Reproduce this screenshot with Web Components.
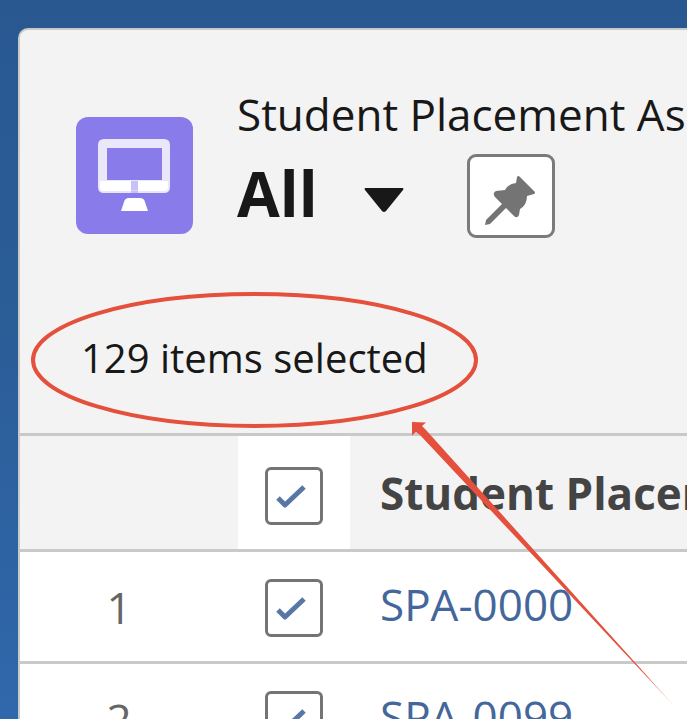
<!DOCTYPE html>
<html lang="en">
<head>
<meta charset="utf-8">
<title>Student Placement</title>
<style>
  html { height: 100%; overflow: hidden; }
  body {
    margin: 0; height: 100%; overflow: hidden;
    font-family: "Open Sans", "Noto Sans", sans-serif;
    color: #181818;
    background: linear-gradient(#295891, #2b5d97 45%, #3068ac);
  }
</style>
</head>
<body>
<list-page></list-page>

<script>
function define(name, html, setup) {
  const template = document.createElement('template');
  template.innerHTML = html;
  customElements.define(name, class extends HTMLElement {
    connectedCallback() {
      if (this.shadowRoot) return;
      const root = this.attachShadow({ mode: 'open' });
      root.append(template.content.cloneNode(true));
      if (setup) setup(this, root);
    }
  });
}

define('object-icon', `
  <style>
    :host { display: block; width: 117px; height: 117px; border-radius: 12px; background: #8a7bea; }
    svg { display: block; width: 100%; height: 100%; }
  </style>
  <svg viewBox="0 0 117 117" aria-hidden="true">
    <path fill="#fff" fill-rule="evenodd" d="M28 22H88Q94 22 94 28V70Q94 76 88 76H28Q22 76 22 70V28Q22 22 28 22ZM31 31V63H86V31Z" opacity=".82"/>
    <path fill="#fff" d="M24 64H55V73H62V64H92V70Q92 74 88 74H28Q24 74 24 70Z"/>
    <path fill="#8a7bea" opacity=".35" d="M55 64H62V76H55Z"/>
    <path fill="#fff" d="M53 81H64Q68 81 69 85L72 94H45L48 85Q49 81 53 81Z"/>
  </svg>`);

define('pin-button', `
  <style>
    :host { display: block; }
    button { display: grid; place-items: center; box-sizing: border-box; width: 88px; height: 84px; padding: 0;
      border: 3px solid #7b7b7b; border-radius: 9px; background: #fff; }
    svg { display: block; width: 82px; height: 78px; }
  </style>
  <button type="button" aria-label="Pin this list view">
    <svg viewBox="0 0 82 78" aria-hidden="true">
      <path fill="#747474" d="M47 20Q48 18 50 20L64 34Q66 36 64 37L57 39Q57 48 50 52L49 58Q47 62 44 59L36 51L20 67L15 68L16 63L32 47L25 40Q22 36 26 34L35 33Q38 27 46 26Z"/>
    </svg>
  </button>`);

define('view-header', `
  <style>
    :host { display: flex; align-items: flex-start; gap: 44px; padding: 54px 0 80px 56px; white-space: nowrap; }
    object-icon { flex: none; margin-top: 33px; }
    .title { flex: 1; min-width: 0; display: flex; flex-direction: column; }
    .name { margin: 0; font-size: 44px; line-height: 60px; font-weight: 400; }
    .view { display: flex; align-items: center; height: 104px; }
    h1 { margin: 0; padding-bottom: 6px; font-size: 62px; line-height: 72px; font-weight: 700; }
    .menu { display: block; margin: 8px 62px 0 45px; padding: 0; border: 0; background: none; color: inherit; }
    .menu svg { display: block; width: 42px; height: 26px; }
  </style>
  <object-icon></object-icon>
  <div class="title">
    <p class="name">Student Placement As</p>
    <div class="view">
      <h1>All</h1>
      <button class="menu" type="button" aria-label="Select a list view">
        <svg viewBox="0 0 42 26" aria-hidden="true"><path fill="#181818" d="M2 1H40Q41 2 40 3L23 24Q21 26 19 24L2 3Q1 2 2 1Z"/></svg>
      </button>
      <pin-button></pin-button>
    </div>
  </div>`);

define('selection-status', `
  <style>
    :host { display: block; padding: 0 0 45px 61px; font-size: 40px; line-height: 60px; white-space: nowrap; }
  </style>
  <slot></slot>`);

define('check-box', `
  <style>
    :host { display: block; width: 58px; height: 58px; }
    label { display: grid; }
    input, svg { grid-area: 1 / 1; width: 58px; height: 58px; box-sizing: border-box; margin: 0; }
    input { appearance: none; border: 3px solid #747474; border-radius: 6px; background: #fff; }
    svg { pointer-events: none; visibility: hidden; }
    input:checked + svg { visibility: visible; }
  </style>
  <label><input type="checkbox" checked>
    <svg viewBox="0 0 58 58" aria-hidden="true"><path fill="none" stroke="#5877a6" stroke-width="5" stroke-linejoin="round" d="M13 31L20 38L39 20"/></svg>
  </label>`,
  (host, root) => root.querySelector('input').setAttribute('aria-label', host.getAttribute('label')));

define('placement-table', `
  <style>
    :host { display: block; }
    table { width: 100%; border-collapse: separate; border-spacing: 0; table-layout: fixed; font-size: 44px; line-height: 60px; }
    .number { width: 218px; }
    .check { width: 112px; }
    th, td { box-sizing: border-box; padding: 0; border-bottom: 3px solid #c9c9c9; font-weight: 400; white-space: nowrap; background: #fff; }
    th { height: 119px; background: #f3f3f3; }
    td { height: 112px; }
    thead th { border-top: 3px solid #c9c9c9; }
    thead .check { background: #fff; padding-top: 6px; }
    tbody .check { padding-top: 2px; }
    .number { text-align: center; color: #666; padding-right: 20px; }
    .check check-box { margin: 0 auto; }
    .name { text-align: left; padding-left: 30px; }
    thead .name { font-weight: 700; color: #444; }
    tbody .name { padding-bottom: 6px; }
    a { color: #44679b; text-decoration: none; }
  </style>
  <table>
    <thead><tr>
      <th class="number"></th>
      <th class="check"><check-box label="Select all items"></check-box></th>
      <th class="name" scope="col">Student Placem</th>
    </tr></thead>
    <tbody></tbody>
  </table>`,
  (host, root) => {
    root.querySelector('tbody').innerHTML = ['SPA-0000', 'SPA-0099'].map((id, i) => `
      <tr><td class="number">${i + 1}</td>
      <td class="check"><check-box label="Select ${id}"></check-box></td>
      <td class="name"><a href="#${id}">${id}</a></td></tr>`).join('');
  });

define('callout-overlay', `
  <style>
    :host { position: absolute; left: 0; top: 0; pointer-events: none; }
    svg { display: block; width: 687px; height: 719px; }
  </style>
  <svg viewBox="0 0 687 719" aria-hidden="true">
    <defs><linearGradient id="fade" gradientUnits="userSpaceOnUse" x1="412" y1="422" x2="674" y2="706">
      <stop offset=".88" stop-color="#e4503b"/><stop offset="1" stop-color="#e4503b" stop-opacity=".3"/>
    </linearGradient></defs>
    <ellipse cx="254.500" cy="360" rx="221.500" ry="66" fill="none" stroke="#e4503b" stroke-width="4"/>
    <path fill="url(#fade)" d="M412 422L426 422.500L422 426L426 430L676 708L420 435L416 432L412 435.500Z"/>
  </svg>`);

define('list-page', `
  <style>
    :host { display: block; position: relative; height: 100%; overflow: hidden; box-sizing: border-box; padding: 28px 0 0 18px; }
    main { overflow: hidden; background: #f3f3f3; border: solid #c9c9c9; border-width: 2px 0 0 2px; border-top-left-radius: 10px; }
  </style>
  <main>
    <view-header></view-header>
    <selection-status>129 items selected</selection-status>
    <placement-table></placement-table>
  </main>
  <callout-overlay></callout-overlay>`);
</script>
</body>
</html>
